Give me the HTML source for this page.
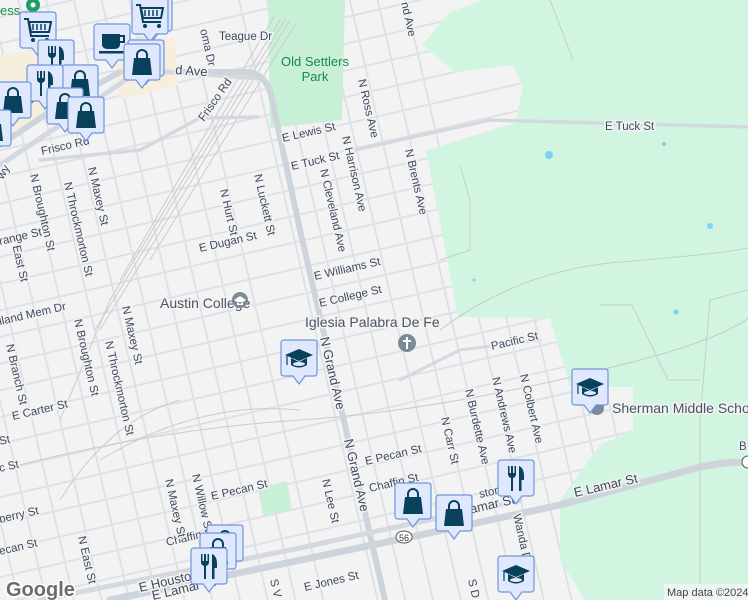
<!DOCTYPE html>
<html><head><meta charset="utf-8"><style>
html,body{margin:0;padding:0;width:748px;height:600px;overflow:hidden;background:#f4f3f4}
svg{display:block;overflow:hidden}
text{font-family:"Liberation Sans",sans-serif;fill:#3c4a5c;font-size:12px}
.s{font-size:11.5px;fill:#3d4b5e;paint-order:stroke;stroke:#f4f3f4;stroke-width:3px}
.poi{font-size:14px;fill:#4a5563;paint-order:stroke;stroke:#f4f3f4;stroke-width:3px}
</style></head><body>
<svg width="748" height="600" viewBox="0 0 748 600" xmlns="http://www.w3.org/2000/svg">
<defs>
<g id="pin"><path d="M3,0 H33 Q36,0 36,3 V33 Q36,36 33,36 H24 L18,44 L12,36 H3 Q0,36 0,33 V3 Q0,0 3,0Z" fill="#dfe8fc" stroke="#6f95dd" stroke-width="1.2"/></g>
<g id="bag"><use href="#pin"/><path d="M13,15 V11 a5,5 0 0 1 10,0 V15" fill="none" stroke="#08415c" stroke-width="2"/><path d="M10,14 H26 L28,31 H8Z" fill="#08415c"/></g>
<g id="fork"><use href="#pin"/><path d="M10,6 V14 Q10,17 13,18 V31 H15 V18 Q18,17 18,14 V6 H16.5 V13 H15 V6 H13 V13 H11.5 V6Z" fill="#08415c"/><path d="M21,31 V6 Q26,8 26,16 V20 H23.5 V31Z" fill="#08415c"/></g>
<g id="cart"><use href="#pin"/><path d="M4,7 H8 L11,24 H29" fill="none" stroke="#08415c" stroke-width="2"/><path d="M9,10 H31 L29,20 H11Z" fill="none" stroke="#08415c" stroke-width="2"/><path d="M13,12V18M17,12V18M21,12V18M25,12V18" stroke="#08415c" stroke-width="1.5"/><circle cx="13" cy="28" r="2" fill="#08415c"/><circle cx="27" cy="28" r="2" fill="#08415c"/></g>
<g id="cup"><use href="#pin"/><path d="M8,10 H26 V20 Q26,25 20,25 H14 Q8,25 8,20Z" fill="#08415c"/><path d="M26,12 H30 V18 H26" fill="none" stroke="#08415c" stroke-width="2"/><rect x="5" y="27" width="26" height="2.5" fill="#08415c"/></g>
<g id="school"><use href="#pin"/><path d="M4,15 L18,9 L32,15 L18,21Z" fill="#08415c"/><path d="M10,18 V25 Q18,30 26,25 V18 L18,22Z" fill="#08415c"/><ellipse cx="18" cy="24" rx="6" ry="2" fill="#dfe8fc"/><path d="M6,16 V25" stroke="#08415c" stroke-width="1.2"/></g>
</defs>

<g transform="rotate(-13 374 300)" stroke="#dee2e7" stroke-width="2">
<line x1="-40" y1="-300" x2="-40" y2="900"/><line x1="-13" y1="-300" x2="-13" y2="900"/><line x1="14" y1="-300" x2="14" y2="900"/><line x1="41" y1="-300" x2="41" y2="900"/><line x1="68" y1="-300" x2="68" y2="900"/><line x1="95" y1="-300" x2="95" y2="900"/><line x1="122" y1="-300" x2="122" y2="900"/><line x1="149" y1="-300" x2="149" y2="900"/><line x1="176" y1="-300" x2="176" y2="900"/><line x1="203" y1="-300" x2="203" y2="900"/><line x1="230" y1="40" x2="230" y2="900"/><line x1="257" y1="40" x2="257" y2="900"/><line x1="310" y1="-300" x2="310" y2="900"/><line x1="337" y1="-300" x2="337" y2="900"/><line x1="364" y1="-300" x2="364" y2="900"/><line x1="391" y1="-300" x2="391" y2="900"/><line x1="418" y1="-300" x2="418" y2="900"/><line x1="445" y1="-300" x2="445" y2="900"/><line x1="472" y1="-300" x2="472" y2="900"/><line x1="499" y1="250" x2="499" y2="900"/><line x1="526" y1="250" x2="526" y2="900"/><line x1="553" y1="250" x2="553" y2="900"/><line x1="580" y1="250" x2="580" y2="900"/>
<line x1="-300" y1="-60" x2="1000" y2="-60"/><line x1="-300" y1="-34" x2="1000" y2="-34"/><line x1="-300" y1="-8" x2="1000" y2="-8"/><line x1="-300" y1="18" x2="1000" y2="18"/><line x1="-300" y1="44" x2="1000" y2="44"/><line x1="-300" y1="70" x2="1000" y2="70"/><line x1="-300" y1="96" x2="1000" y2="96"/><line x1="-300" y1="122" x2="1000" y2="122"/><line x1="-300" y1="148" x2="1000" y2="148"/><line x1="-300" y1="174" x2="1000" y2="174"/><line x1="-300" y1="200" x2="1000" y2="200"/><line x1="-300" y1="226" x2="1000" y2="226"/><line x1="-300" y1="252" x2="1000" y2="252"/><line x1="-300" y1="278" x2="1000" y2="278"/><line x1="-300" y1="304" x2="1000" y2="304"/><line x1="-300" y1="330" x2="1000" y2="330"/><line x1="-300" y1="356" x2="1000" y2="356"/><line x1="-300" y1="382" x2="1000" y2="382"/><line x1="-300" y1="408" x2="1000" y2="408"/><line x1="-300" y1="434" x2="1000" y2="434"/><line x1="-300" y1="460" x2="1000" y2="460"/><line x1="-300" y1="486" x2="1000" y2="486"/><line x1="-300" y1="512" x2="1000" y2="512"/>
</g>

<path d="M110,40 L175,38 L178,85 L120,100Z" fill="#f6efdd"/>
<path d="M0,55 L40,50 L45,120 L0,135Z" fill="#f6efdd"/>

<path d="M483,0 L748,0 L748,600 L585,600 L560,560 L560,500 L600,445 L633,430 L633,387 L570,387 L550,318 L458,317 L426,150 L515,123 L523,87 L513,65 L455,72 L422,45 L450,12Z" fill="#d1f5e1"/>
<path d="M268,0 L345,0 L342,120 L270,128Z" fill="#c8f0d6"/>
<path d="M258,488 L287,481 L292,510 L263,516Z" fill="#c8f0d6"/>
<circle cx="549" cy="155" r="4" fill="#7fd3ee"/><circle cx="710" cy="226" r="3" fill="#7fd3ee"/><circle cx="676" cy="312" r="2.5" fill="#7fd3ee"/><circle cx="664" cy="144" r="2" fill="#7fd3ee"/><circle cx="474" cy="280" r="1.5" fill="#7fd3ee"/>

<g fill="none" stroke="#c3cfc9" stroke-width="1">
<path d="M440,330 Q520,270 620,262 T748,248"/>
<path d="M600,305 L632,305 L668,380 L700,380"/>
<path d="M748,290 L710,300 L700,420 L700,600"/>
<path d="M460,165 L470,200 L470,250 L440,260"/>
<path d="M550,0 L573,60"/>
</g>

<g fill="none" stroke="#c9cbce" stroke-width="1">
<path d="M290,20 L100,330"/><path d="M285,20 L95,330"/><path d="M280,20 L110,300 L60,420"/><path d="M275,15 L120,280"/><path d="M295,25 L150,260"/>
<path d="M0,470 Q150,430 300,420 T640,360 T748,250"/><path d="M100,460 Q200,400 300,410"/><path d="M60,500 Q110,420 180,400"/>
</g>

<g fill="none" stroke-linecap="round">
<path d="M0,165 L60,125 L140,70 L258,78" stroke="#d4d9df" stroke-width="5"/>
<path d="M0,145 L60,105 L120,72" stroke="#cdd4dc" stroke-width="6"/>
<path d="M40,160 L140,150 L200,118 L258,117" stroke="#d4d9df" stroke-width="3.5"/>
<path d="M180,72 L250,72 Q268,76 272,100 L300,230 L330,360 L385,600" stroke="#cdd4dc" stroke-width="6"/>
<path d="M355,150 L490,120 L748,127" stroke="#d4d9df" stroke-width="3.5"/>
<path d="M110,600 L420,535 L560,505 L700,467 Q735,460 748,463" stroke="#cdd4dc" stroke-width="7"/>
<path d="M40,600 L300,548 L520,500" stroke="#d4d9df" stroke-width="5"/>
<path d="M400,380 L460,350 L540,340" stroke="#d4d9df" stroke-width="3"/>
</g>

<text x="219" y="40" class="s">Teague Dr</text>
<text x="315" y="66" text-anchor="middle" style="font-size:13px;fill:#188a4a">Old Settlers</text>
<text x="315" y="81" text-anchor="middle" style="font-size:13px;fill:#188a4a">Park</text>
<text x="175" y="74" class="s" style="font-size:13px" transform="rotate(4 175 74)">d Ave</text>
<text x="200" y="30" class="s" transform="rotate(77 200 30)">oma Dr</text>
<text x="204" y="122" class="s" transform="rotate(-55 204 122)">Frisco Rd</text>
<text x="42" y="155" class="s" transform="rotate(-13 42 155)">Frisco Rd</text>
<text x="605" y="130" class="s">E Tuck St</text>
<text x="283" y="142" class="s" transform="rotate(-13 283 142)">E Lewis St</text>
<text x="292" y="170" class="s" transform="rotate(-13 292 170)">E Tuck St</text>
<text x="401" y="3" class="s" transform="rotate(77 401 3)">nd Ave</text>
<text x="358" y="80" class="s" transform="rotate(77 358 80)">N Ross Ave</text>
<text x="342" y="137" class="s" transform="rotate(77 342 137)">N Harrison Ave</text>
<text x="320" y="170" class="s" transform="rotate(77 320 170)">N Cleveland Ave</text>
<text x="405" y="150" class="s" transform="rotate(77 405 150)">N Brents Ave</text>
<text x="254" y="175" class="s" transform="rotate(77 254 175)">N Luckett St</text>
<text x="220" y="190" class="s" transform="rotate(77 220 190)">N Hurt St</text>
<text x="200" y="252" class="s" transform="rotate(-13 200 252)">E Dugan St</text>
<text x="315" y="280" class="s" transform="rotate(-13 315 280)">E Williams St</text>
<text x="320" y="307" class="s" transform="rotate(-13 320 307)">E College St</text>
<text x="88" y="168" class="s" transform="rotate(77 88 168)">N Maxey St</text>
<text x="64" y="183" class="s" transform="rotate(77 64 183)">N Throckmorton St</text>
<text x="30" y="175" class="s" transform="rotate(77 30 175)">N Broughton St</text>
<text x="74" y="320" class="s" transform="rotate(77 74 320)">N Broughton St</text>
<text x="105" y="342" class="s" transform="rotate(77 105 342)">N Throckmorton St</text>
<text x="122" y="307" class="s" transform="rotate(77 122 307)">N Maxey St</text>
<text x="10" y="235" class="s" transform="rotate(77 10 235)">N East St</text>
<text x="0" y="245" class="s" transform="rotate(-13 0 245)">range St</text>
<text x="0" y="325" class="s" transform="rotate(-13 0 325)">lland Mem Dr</text>
<text x="6" y="345" class="s" transform="rotate(77 6 345)">N Branch St</text>
<text x="3" y="180" class="s" transform="rotate(-60 3 180)">wy</text>
<text x="30" y="108" class="s" transform="rotate(-60 30 108)">N Loy</text>
<text x="160" y="308" class="poi">Austin College</text>
<circle cx="240" cy="300" r="8" fill="#7b8a96"/><path d="M234,300 L240,296 L246,300 L240,304Z M237,302 V305 H243 V302" fill="#fff"/>
<text x="305" y="327" class="poi">Iglesia Palabra De Fe</text>
<circle cx="407" cy="343" r="9" fill="#7b8a96"/><path d="M406,337 H408 V340 H411 V342 H408 V349 H406 V342 H403 V340 H406Z" fill="#fff"/>
<text x="492" y="350" class="s" transform="rotate(-13 492 350)">Pacific St</text>
<text x="320" y="338" class="s" style="font-size:13px" transform="rotate(77 320 338)">N Grand Ave</text>
<text x="344" y="440" class="s" style="font-size:13px" transform="rotate(77 344 440)">N Grand Ave</text>
<text x="441" y="418" class="s" transform="rotate(77 441 418)">N Carr St</text>
<text x="465" y="390" class="s" transform="rotate(77 465 390)">N Burdette Ave</text>
<text x="492" y="378" class="s" transform="rotate(77 492 378)">N Andrews Ave</text>
<text x="520" y="375" class="s" transform="rotate(77 520 375)">N Colbert Ave</text>
<text x="612" y="413" class="poi">Sherman Middle Scho</text>
<circle cx="597" cy="408" r="7" fill="#7b8a96"/>
<text x="13" y="420" class="s" transform="rotate(-13 13 420)">E Carter St</text>
<text x="0" y="445" class="s" transform="rotate(-13 0 445)">St</text>
<text x="0" y="472" class="s" transform="rotate(-13 0 472)">c St</text>
<text x="366" y="465" class="s" transform="rotate(-13 366 465)">E Pecan St</text>
<text x="212" y="500" class="s" transform="rotate(-13 212 500)">E Pecan St</text>
<text x="0" y="523" class="s" transform="rotate(-13 0 523)">berry St</text>
<text x="0" y="555" class="s" transform="rotate(-13 0 555)">ecan St</text>
<text x="167" y="546" class="s" transform="rotate(-13 167 546)">Chaffin</text>
<text x="370" y="492" class="s" transform="rotate(-13 370 492)">Chaffin St</text>
<text x="480" y="498" class="s" transform="rotate(-13 480 498)">ston St</text>
<text x="165" y="480" class="s" transform="rotate(77 165 480)">N Maxey St</text>
<text x="192" y="475" class="s" transform="rotate(77 192 475)">N Willow St</text>
<text x="322" y="480" class="s" transform="rotate(77 322 480)">N Lee St</text>
<text x="78" y="537" class="s" transform="rotate(77 78 537)">N East St</text>
<text x="513" y="515" class="s" transform="rotate(77 513 515)">Wanda Dr</text>
<text x="468" y="580" class="s" transform="rotate(77 468 580)">S D</text>
<text x="270" y="580" class="s" transform="rotate(77 270 580)">S V</text>
<text x="575" y="497" class="s" style="font-size:13px" transform="rotate(-13 575 497)">E Lamar St</text>
<text x="452" y="518" class="s" style="font-size:13px" transform="rotate(-13 452 518)">E Lamar St</text>
<text x="140" y="592" class="s" style="font-size:13px" transform="rotate(-13 140 592)">E Houston</text>
<text x="153" y="600" class="s" style="font-size:13px" transform="rotate(-13 153 600)">E Lamar St</text>
<text x="305" y="591" class="s" transform="rotate(-13 305 591)">E Jones St</text>
<text x="739" y="450" class="s">B</text>
<circle cx="748" cy="462" r="6" fill="#fff" stroke="#555" stroke-width="1"/>
<ellipse cx="404" cy="537" rx="8" ry="6" fill="#fff" stroke="#555" stroke-width="1"/><text x="404" y="541" text-anchor="middle" style="font-size:9px;fill:#333">56</text>
<text x="0" y="15" style="font-size:13px;fill:#188a4a">ess</text>
<circle cx="33" cy="5" r="7" fill="#1e9e6a"/><circle cx="33" cy="5" r="2.5" fill="#fff"/>

<use href="#cart" x="20" y="12"/>
<use href="#cart" x="136" y="-5"/>
<use href="#cart" x="132" y="-2"/>
<use href="#cup" x="94" y="24"/>
<use href="#bag" x="128" y="40"/>
<use href="#bag" x="124" y="44"/>
<use href="#fork" x="38" y="40"/>
<use href="#bag" x="62" y="65"/>
<use href="#fork" x="27" y="65"/>
<use href="#bag" x="-5" y="82"/>
<use href="#bag" x="47" y="88"/>
<use href="#bag" x="68" y="97"/>
<use href="#bag" x="-25" y="110"/>
<use href="#school" x="281" y="340"/>
<use href="#school" x="572" y="369"/>
<use href="#bag" x="395" y="483"/>
<use href="#bag" x="436" y="495"/>
<use href="#fork" x="498" y="460"/>
<use href="#school" x="498" y="556"/>
<use href="#bag" x="207" y="525"/>
<use href="#bag" x="200" y="533"/>
<use href="#fork" x="191" y="548"/>

<text x="6" y="596" style="font-size:20px;font-weight:bold;fill:#6c6c6c;stroke:#fff;stroke-width:3px;paint-order:stroke">Google</text>
<rect x="664" y="584" width="84" height="16" fill="#f5f5f5" opacity="0.85"/>
<text x="667" y="596" style="font-size:11px;fill:#444">Map data ©2024</text>
</svg>
</body></html>
